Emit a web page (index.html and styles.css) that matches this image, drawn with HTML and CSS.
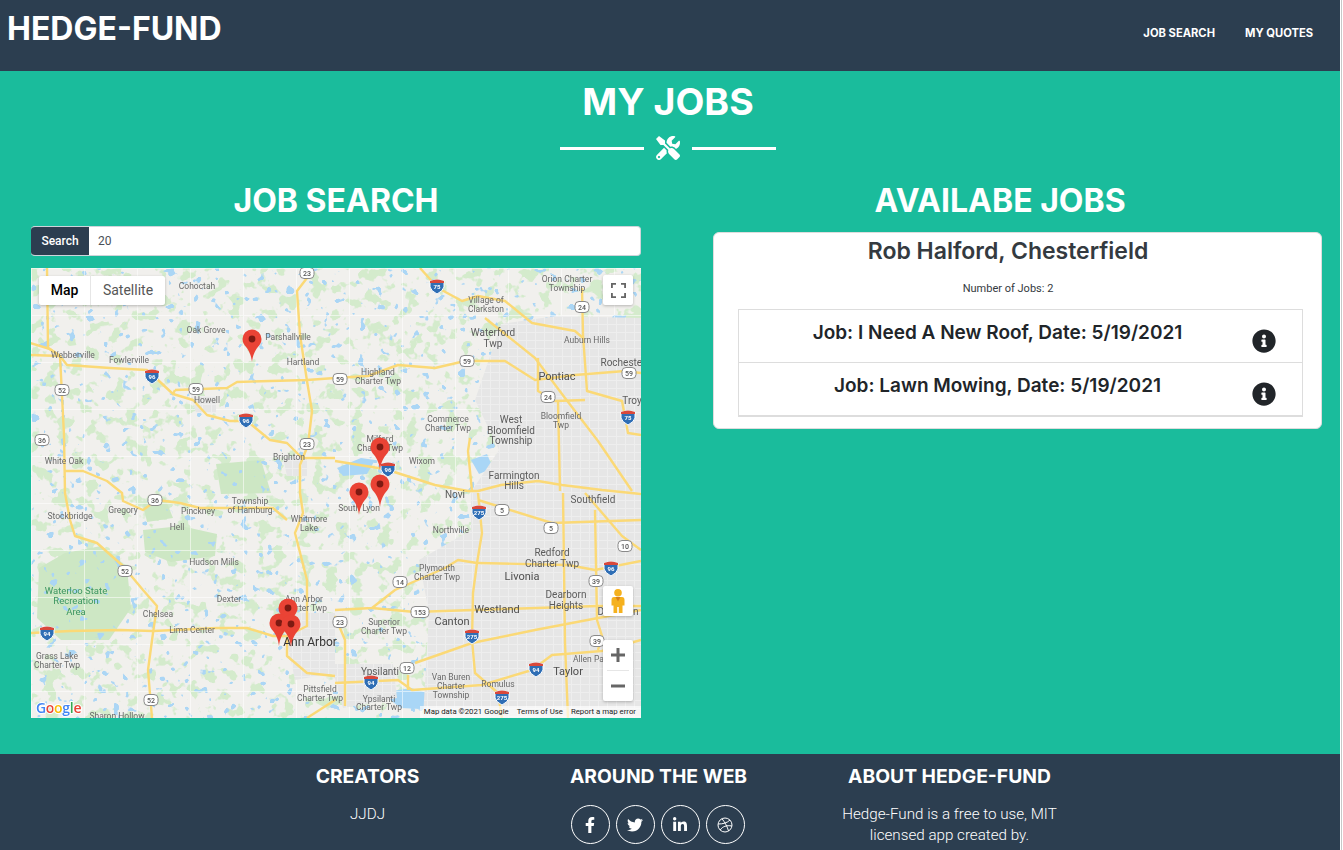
FILE: index.html
```html
<!DOCTYPE html>
<html lang="en">
<head>
<meta charset="utf-8">
<title>Hedge-Fund</title>
<link rel="stylesheet" href="styles.css">
</head>
<body>
<div class="page">
  <header class="navbar">
    <a class="brand">HEDGE-FUND</a>
    <nav class="nav-links"><a>JOB SEARCH</a><a>MY QUOTES</a></nav>
  </header>
  <main class="masthead">
    <h1 class="page-title">MY JOBS</h1>
    <div class="divider">
      <span class="divider-line"></span>
      <svg class="divider-icon" viewBox="0 0 512 512"><path d="M501.1 395.7L384 278.6c-23.1-23.1-57.6-27.6-85.4-13.9L192 158.1V96L64 0 0 64l96 128h62.1l106.6 106.6c-13.6 27.8-9.2 62.3 13.9 85.4l117.1 117.1c14.6 14.6 38.2 14.6 52.7 0l52.7-52.7c14.5-14.6 14.5-38.2 0-52.7zM331.7 225c28.3 0 54.9 11 74.9 31l19.4 19.4c15.8-6.9 30.8-16.5 43.8-29.5 37.1-37.1 49.7-89.3 37.9-136.7-2.2-9-13.5-12.1-20.1-5.5l-74.4 74.4-67.9-11.3L334 98.9l74.4-74.4c6.6-6.6 3.4-17.9-5.7-20.2-47.4-11.7-99.6.9-136.6 37.9-28.5 28.5-41.9 66.1-41.2 103.6l82.1 82.1c8.1-1.9 16.5-2.9 24.7-2.9zm-103.9 82l-56.7-56.7L18.7 402.8c-25 25-25 65.5 0 90.5s65.5 25 90.5 0l123.6-123.6c-7.6-19.9-9.9-41.6-5-62.7zM64 472c-13.2 0-24-10.8-24-24 0-13.3 10.7-24 24-24s24 10.7 24 24c0 13.2-10.7 24-24 24z"/></svg>
      <span class="divider-line"></span>
    </div>
    <div class="columns">
      <section class="col-left">
        <h2 class="col-title">JOB SEARCH</h2>
        <div class="search-group">
          <span class="search-label">Search</span>
          <div class="search-input">20</div>
        </div>
        <div class="map">
          <svg class="map-canvas" viewBox="0 0 610 450" width="610" height="450">
            <defs>
              <filter id="greens" x="0" y="0" width="100%" height="100%" color-interpolation-filters="sRGB">
                <feTurbulence type="fractalNoise" baseFrequency="0.075" numOctaves="3" seed="11"/>
                <feColorMatrix values="0 0 0 0 .83  0 0 0 0 .92  0 0 0 0 .80  1 0 0 0 0"/>
                <feComponentTransfer><feFuncA type="linear" slope="14" intercept="-7.900"/></feComponentTransfer>
              </filter>
              <filter id="lakes" x="0" y="0" width="100%" height="100%" color-interpolation-filters="sRGB">
                <feTurbulence type="fractalNoise" baseFrequency="0.11" numOctaves="2" seed="4"/>
                <feColorMatrix values="0 0 0 0 .67  0 0 0 0 .84  0 0 0 0 .96  0 1 0 0 0"/>
                <feComponentTransfer><feFuncA type="linear" slope="24" intercept="-16.300"/></feComponentTransfer>
              </filter>
              <pattern id="rural" width="53" height="47" patternUnits="userSpaceOnUse">
                <path d="M0 .5H53M.5 0V47" stroke="#fff" stroke-width="1" fill="none"/>
              </pattern>
              <pattern id="streets" width="9" height="8" patternUnits="userSpaceOnUse">
                <rect width="9" height="8" fill="#e6e6e6"/>
                <path d="M0 .5H9M.5 0V8" stroke="#eeeeee" stroke-width="1" fill="none"/>
              </pattern>
              <g id="pin">
                <path d="M0 22C-.8 15-3 11-5.500 7.500C-8 4.500-9.500 2.500-9.500-1A9.500 9.500 0 0 1 9.500-1C9.500 2.500 8 4.500 5.500 7.500C3 11 .8 15 0 22Z" fill="#ea4335"/>
                <circle cy="-1" r="3.400" fill="#7d1a12"/>
              </g>
              <g id="inter">
                <path d="M-7-5Q0-8 7-5L7 1Q6 5 0 8Q-6 5-7 1Z" fill="#2f6eb5" stroke="#fff" stroke-width="1"/>
                <path d="M-7-5Q0-8 7-5L7-3H-7Z" fill="#d9483b"/>
              </g>
              <rect id="shield" x="-7" y="-5.500" width="14" height="11" rx="4" fill="#fff" stroke="#8a8a8a" stroke-width="1"/>
              <rect id="shield3" x="-9" y="-5.500" width="18" height="11" rx="4" fill="#fff" stroke="#8a8a8a" stroke-width="1"/>
            </defs>

            <rect class="land" width="610" height="450"/>
            <rect width="610" height="450" filter="url(#greens)"/>
            <path class="park" d="M8 300L34 285 70 278 96 300 100 340 78 372H30L6 350Z"/>
            <path class="park" d="M112 262L150 258 186 266 184 288 140 294 114 284Z"/>
            <path class="park" d="M185 196L230 192 240 225 190 226Z"/>
            <path class="park" d="M112 236L134 230 142 250 116 254Z"/>
            <rect width="610" height="450" filter="url(#lakes)"/>
            <path class="water" d="M476 128L490 116 510 118 502 140 480 138Z"/>
            <path class="water" d="M306 200L330 190 344 192 336 206 312 208Z"/>
            <path class="water" d="M440 192L456 186 462 200 448 206Z"/>
            <path class="water" d="M350 425L380 420 420 432 410 442 370 440Z"/>
            <rect class="rural" width="610" height="450" fill="url(#rural)"/>
            <path fill="url(#streets)" d="M470 56L525 48 610 50V450H392L398 345 388 292 440 262 440 224 468 182 444 132Z"/>
            <path fill="url(#streets)" d="M250 345L304 345 304 405 264 412Z"/>
            <path fill="url(#streets)" d="M300 396L362 396 366 430 312 440Z"/>
            <path fill="url(#streets)" d="M252 190H276V208H256Z"/>
            <path fill="url(#streets)" d="M160 128H185V145H165Z"/>

            <g class="roads">
              <path d="M-1 87L29 88 36 97 79 100 116 102 127 112 142 126 162 132 176 147 199 153 216 153 239 172 256 175 271 190"/>
              <path d="M304 193L347 200 357 202 404 217 437 223 447 223 470 217 507 213 531 217 571 222 610 226"/>
              <path d="M-1 75L19 81 29 88"/>
              <path d="M16 0L17 80 29 88 33 167 34 225 39 252 44 268 66 275 92 298 112 322 126 338 122 365 117 402 121 450"/>
              <path d="M144 122L196 120 206 114 276 112 304 110 337 108 367 97 404 100 434 93 474 93 504 112 544 107 594 103 610 105"/>
              <path d="M142 126L144 122"/>
              <path d="M276 10L266 23 269 67 276 113 281 143 277 177 269 197 269 225 272 245 264 265 276 312 276 358 256 368 256 388 276 405 304 408"/>
              <path d="M271 190H304"/>
              <path d="M34 203H52L76 213 91 225 92 233 112 242 126 232 149 235 169 240 242 240 256 252"/>
              <path d="M-1 365L39 363 89 362 122 363 186 360 216 360 242 368 256 368"/>
              <path d="M389 0L407 20 431 33 447 28 474 33 501 55 544 63 552 70"/>
              <path d="M551 20L552 67 556 123 591 133 597 165 610 167"/>
              <path d="M454 50L504 90 534 130 567 173 601 223"/>
              <path d="M507 90V123L524 133 554 132"/>
              <path d="M527 133L529 223"/>
              <path d="M439 170L437 183 441 223"/>
              <path d="M447 225L451 265 446 295 442 325 441 372 444 405 467 425 471 450"/>
              <path d="M446 295L427 292 414 300 364 322 341 340 304 342"/>
              <path d="M341 340L384 344 442 342 567 338 610 338"/>
              <path d="M446 295L537 297 564 302 610 293"/>
              <path d="M532 225L534 375 537 450"/>
              <path d="M564 242L566 352 571 368 567 382"/>
              <path d="M447 232L521 255 610 252"/>
              <path d="M554 225L591 268 610 282"/>
              <path d="M304 348L314 372V438"/>
              <path d="M384 395L441 375 504 362 567 350 610 342"/>
              <path d="M304 415L367 412 381 422 451 417 501 402 521 387 571 383 610 372"/>
              <path d="M377 407V422"/>
              <path d="M276 450L304 432"/>
            </g>

            <g class="labels">
              <text x="166" y="21">Cohoctah</text><text x="175" y="65">Oak Grove</text><text x="257" y="72">Parshallville</text><text x="272" y="97">Hartland</text>
              <text x="42" y="90">Webberville</text><text x="98" y="95">Fowlerville</text><text x="176" y="135">Howell</text><text x="258" y="192">Brighton</text><text x="33" y="196">White Oak</text>
              <text x="536" y="14">Orion Charter</text><text x="536" y="23">Township</text><text x="455" y="35">Village of</text><text x="455" y="44">Clarkston</text>
              <text class="lg" x="462" y="68">Waterford</text><text class="lg" x="462" y="79">Twp</text><text x="556" y="75">Auburn Hills</text><text x="610" y="80" class="end">Rochester Hills</text>
              <text class="lg" x="592" y="98">Rochester</text><text class="xl" x="526" y="112">Pontiac</text><text x="347" y="107">Highland</text><text x="347" y="116">Charter Twp</text>
              <text class="lg" x="601" y="136">Troy</text><text x="417" y="154">Commerce</text><text x="417" y="163">Charter Twp</text><text class="lg" x="480" y="155">West</text><text class="lg" x="480" y="166">Bloomfield</text><text class="lg" x="480" y="176">Township</text>
              <text x="530" y="151">Bloomfield</text><text x="530" y="160">Twp</text><text x="349" y="174">Milford</text><text x="349" y="183">Charter Twp</text><text x="391" y="196">Wixom</text>
              <text class="lg" x="483" y="211">Farmington</text><text class="lg" x="483" y="221">Hills</text><text class="lg" x="424" y="230">Novi</text>
              <text x="39" y="251">Stockbridge</text><text x="92" y="245">Gregory</text><text x="167" y="246">Pinckney</text><text x="219" y="236">Township</text><text x="219" y="245">of Hamburg</text><text x="278" y="254">Whitmore</text><text x="278" y="263">Lake</text><text x="146" y="262">Hell</text>
              <text x="183" y="297">Hudson Mills</text><text class="green" x="45" y="326">Waterloo State</text><text class="green" x="45" y="336">Recreation</text><text class="green" x="45" y="347">Area</text>
              <text x="198" y="334">Dexter</text><text x="273" y="334">Ann Arbor</text><text x="273" y="343">Charter Twp</text><text x="127" y="349">Chelsea</text><text x="161" y="365">Lima Center</text>
              <text x="26" y="391">Grass Lake</text><text x="26" y="400">Charter Twp</text><text x="289" y="424">Pittsfield</text><text x="289" y="433">Charter Twp</text><text x="86" y="451">Sharon Hollow</text>
              <text x="328" y="243">South Lyon</text><text class="lg" x="562" y="235">Southfield</text><text x="420" y="265">Northville</text><text class="lg" x="521" y="288">Redford</text><text class="lg" x="521" y="299">Charter Twp</text>
              <text x="406" y="303">Plymouth</text><text x="406" y="312">Charter Twp</text><text class="xl" x="491" y="312">Livonia</text><text class="lg" x="535" y="330">Dearborn</text><text class="lg" x="535" y="341">Heights</text>
              <text class="xl" x="466" y="345">Westland</text><text class="xl" x="421" y="357">Canton</text><text x="353" y="357">Superior</text><text x="353" y="366">Charter Twp</text><text class="lg" x="587" y="347">Dearborn</text><text x="561" y="394">Allen Park</text>
              <text class="lg" x="349" y="407">Ypsilanti</text><text class="xl" x="537" y="407">Taylor</text><text x="420" y="412">Van Buren</text><text x="420" y="421">Charter</text><text x="420" y="430">Township</text><text x="467" y="419">Romulus</text><text x="348" y="434">Ypsilanti</text><text x="348" y="442">Charter Twp</text>
              <text class="xl dark" x="279" y="378">Ann Arbor</text>
            </g>

            <g class="i-shields">
              <g transform="translate(121 108)"><use href="#inter"/><text y="3">96</text></g>
              <g transform="translate(215 152)"><use href="#inter"/><text y="3">96</text></g>
              <g transform="translate(357 201)"><use href="#inter"/><text y="3">96</text></g>
              <g transform="translate(580 300)"><use href="#inter"/><text y="3">96</text></g>
              <g transform="translate(406 18)"><use href="#inter"/><text y="3">75</text></g>
              <g transform="translate(597 149)"><use href="#inter"/><text y="3">75</text></g>
              <g transform="translate(448 244)"><use href="#inter"/><text y="3">275</text></g>
              <g transform="translate(441 368)"><use href="#inter"/><text y="3">275</text></g>
              <g transform="translate(471 429)"><use href="#inter"/><text y="3">275</text></g>
              <g transform="translate(16 365)"><use href="#inter"/><text y="3">94</text></g>
              <g transform="translate(340 414)"><use href="#inter"/><text y="3">94</text></g>
              <g transform="translate(505 401)"><use href="#inter"/><text y="3">94</text></g>
            </g>
            <g class="w-shields">
              <g transform="translate(276 5)"><use href="#shield"/><text y="2.500">23</text></g>
              <g transform="translate(276 176)"><use href="#shield"/><text y="2.500">23</text></g>
              <g transform="translate(309 354)"><use href="#shield"/><text y="2.500">23</text></g>
              <g transform="translate(31 122)"><use href="#shield"/><text y="2.500">52</text></g>
              <g transform="translate(94 303)"><use href="#shield"/><text y="2.500">52</text></g>
              <g transform="translate(120 432)"><use href="#shield"/><text y="2.500">52</text></g>
              <g transform="translate(11 172)"><use href="#shield"/><text y="2.500">36</text></g>
              <g transform="translate(124 232)"><use href="#shield"/><text y="2.500">36</text></g>
              <g transform="translate(165 121)"><use href="#shield"/><text y="2.500">59</text></g>
              <g transform="translate(436 93)"><use href="#shield"/><text y="2.500">59</text></g>
              <g transform="translate(309 111)"><use href="#shield"/><text y="2.500">59</text></g>
              <g transform="translate(598 105)"><use href="#shield"/><text y="2.500">59</text></g>
              <g transform="translate(551 39)"><use href="#shield"/><text y="2.500">24</text></g>
              <g transform="translate(517 129)"><use href="#shield"/><text y="2.500">24</text></g>
              <g transform="translate(471 242)"><use href="#shield"/><text y="2.500">5</text></g>
              <g transform="translate(520 260)"><use href="#shield"/><text y="2.500">5</text></g>
              <g transform="translate(594 278)"><use href="#shield"/><text y="2.500">10</text></g>
              <g transform="translate(369 314)"><use href="#shield"/><text y="2.500">14</text></g>
              <g transform="translate(389 344)"><use href="#shield3"/><text y="2.500">153</text></g>
              <g transform="translate(376 400)"><use href="#shield"/><text y="2.500">12</text></g>
              <g transform="translate(565 313)"><use href="#shield"/><text y="2.500">39</text></g>
              <g transform="translate(566 373)"><use href="#shield"/><text y="2.500">39</text></g>
            </g>

            <use href="#pin" x="221" y="72"/>
            <use href="#pin" x="349" y="180"/>
            <use href="#pin" x="349" y="217"/>
            <use href="#pin" x="328" y="225"/>
            <use href="#pin" x="257" y="341"/>
            <use href="#pin" x="248" y="356"/>
            <use href="#pin" x="260" y="357"/>

            <text class="google" x="5" y="445"><tspan fill="#4285f4">G</tspan><tspan fill="#ea4335">o</tspan><tspan fill="#fbbc05">o</tspan><tspan fill="#4285f4">g</tspan><tspan fill="#34a853">l</tspan><tspan fill="#ea4335">e</tspan></text>
          </svg>

          <div class="map-type"><span class="map-type-on">Map</span><span class="map-type-off">Satellite</span></div>
          <div class="ctl ctl-full">
            <svg viewBox="0 0 18 18" width="15" height="15"><path d="M1 6V1H6M12 1H17V6M17 12V17H12M6 17H1V12" fill="none" stroke="#666" stroke-width="2.400"/></svg>
          </div>
          <div class="ctl ctl-peg">
            <svg viewBox="0 0 14 24" width="14" height="24"><circle cx="7" cy="3.800" r="3.800" fill="#f5b11e"/><path d="M3 8H11Q13.500 8 13.500 11V16.500H11.500V24H7.800V18H6.200V24H2.500V16.500H.5V11Q.5 8 3 8Z" fill="#f5b11e"/><path d="M4.500 8L7 12.500 9.500 8Z" fill="#d8801a"/></svg>
          </div>
          <div class="ctl ctl-zoom">
            <span class="zoom-btn"><svg viewBox="0 0 14 14" width="14" height="14"><path d="M7 0V14M0 7H14" stroke="#666" stroke-width="3"/></svg></span>
            <span class="zoom-sep"></span>
            <span class="zoom-btn"><svg viewBox="0 0 14 14" width="14" height="14"><path d="M0 7H14" stroke="#666" stroke-width="3"/></svg></span>
          </div>
          <div class="attribution"><span>Map data ©2021 Google</span><span>Terms of Use</span><span>Report a map error</span></div>
        </div>
      </section>

      <section class="col-right">
        <h2 class="col-title">AVAILABE JOBS</h2>
        <div class="card">
          <h3 class="card-title">Rob Halford, Chesterfield</h3>
          <p class="card-count">Number of Jobs: 2</p>
          <ul class="job-list">
            <li class="job-row">
              <span class="job-text">Job: I Need A New Roof, Date: 5/19/2021</span>
              <svg class="info" viewBox="0 0 512 512"><path d="M256 8C119.043 8 8 119.083 8 256c0 136.997 111.043 248 248 248s248-111.003 248-248C504 119.083 392.957 8 256 8zm0 110c23.196 0 42 18.804 42 42s-18.804 42-42 42-42-18.804-42-42 18.804-42 42-42zm56 254c0 6.627-5.373 12-12 12h-88c-6.627 0-12-5.373-12-12v-24c0-6.627 5.373-12 12-12h12v-64h-12c-6.627 0-12-5.373-12-12v-24c0-6.627 5.373-12 12-12h64c6.627 0 12 5.373 12 12v100h12c6.627 0 12 5.373 12 12v24z"/></svg>
            </li>
            <li class="job-row">
              <span class="job-text">Job: Lawn Mowing, Date: 5/19/2021</span>
              <svg class="info" viewBox="0 0 512 512"><path d="M256 8C119.043 8 8 119.083 8 256c0 136.997 111.043 248 248 248s248-111.003 248-248C504 119.083 392.957 8 256 8zm0 110c23.196 0 42 18.804 42 42s-18.804 42-42 42-42-18.804-42-42 18.804-42 42-42zm56 254c0 6.627-5.373 12-12 12h-88c-6.627 0-12-5.373-12-12v-24c0-6.627 5.373-12 12-12h12v-64h-12c-6.627 0-12-5.373-12-12v-24c0-6.627 5.373-12 12-12h64c6.627 0 12 5.373 12 12v100h12c6.627 0 12 5.373 12 12v24z"/></svg>
            </li>
          </ul>
        </div>
      </section>
    </div>
  </main>
  <footer class="footer">
    <div class="footer-col">
      <h4 class="footer-title">CREATORS</h4>
      <p class="footer-text">JJDJ</p>
    </div>
    <div class="footer-col">
      <h4 class="footer-title">AROUND THE WEB</h4>
      <div class="socials">
        <a class="social"><svg viewBox="0 0 320 512" width="10" height="16"><path d="M279.14 288l14.22-92.66h-88.91v-60.13c0-25.35 12.42-50.06 52.24-50.06h40.42V6.26S260.43 0 225.36 0c-73.22 0-121.08 44.38-121.08 124.72v70.62H22.89V288h81.39v224h100.17V288z"/></svg></a>
        <a class="social"><svg viewBox="0 0 512 512" width="16" height="16"><path d="M459.37 151.716c.325 4.548.325 9.097.325 13.645 0 138.72-105.583 298.558-298.558 298.558-59.452 0-114.68-17.219-161.137-47.106 8.447.974 16.568 1.299 25.34 1.299 49.055 0 94.213-16.568 130.274-44.832-46.132-.975-84.792-31.188-98.112-72.772 6.498.974 12.995 1.624 19.818 1.624 9.421 0 18.843-1.3 27.614-3.573-48.081-9.747-84.143-51.98-84.143-102.985v-1.299c13.969 7.797 30.214 12.67 47.431 13.319-28.264-18.843-46.781-51.005-46.781-87.391 0-19.492 5.197-37.36 14.294-52.954 51.655 63.675 129.3 105.258 216.365 109.807-1.624-7.797-2.599-15.918-2.599-24.04 0-57.828 46.782-104.934 104.934-104.934 30.213 0 57.502 12.67 76.67 33.137 23.715-4.548 46.456-13.32 66.599-25.34-7.798 24.366-24.366 44.833-46.132 57.827 21.117-2.273 41.584-8.122 60.426-16.243-14.292 20.791-32.161 39.308-52.628 54.253z"/></svg></a>
        <a class="social"><svg viewBox="0 0 448 512" width="14" height="16"><path d="M100.28 448H7.4V148.9h92.88zM53.79 108.1C24.09 108.1 0 83.5 0 53.8a53.79 53.79 0 0 1 107.58 0c0 29.7-24.1 54.3-53.79 54.3zM447.9 448h-92.68V302.4c0-34.7-.7-79.2-48.29-79.2-48.29 0-55.69 37.7-55.69 76.7V448h-92.78V148.9h89.08v40.8h1.3c12.4-23.5 42.69-48.3 87.88-48.3 94 0 111.28 61.9 111.28 142.3V448z"/></svg></a>
        <a class="social"><svg class="dribbble" viewBox="0 0 16 16" width="16" height="16"><circle cx="8" cy="8" r="7"/><path d="M5 1.700C8 5.500 10.500 10 11.500 14M1.200 7C6 7 10 6 13 3M3.200 13C5.500 9.500 9.500 8 14.900 9"/></svg></a>
      </div>
    </div>
    <div class="footer-col">
      <h4 class="footer-title">ABOUT HEDGE-FUND</h4>
      <p class="footer-text">Hedge-Fund is a free to use, MIT<br>licensed app created by.</p>
    </div>
  </footer>
</div>
<div class="edge"></div>
</body>
</html>
```
FILE: styles.css
```css
* { box-sizing: border-box; }
html, body { margin: 0; padding: 0; background: #fff; }
body {
  display: flex;
  width: 1343px;
  height: 850px;
  overflow: hidden;
  font-family: Roboto, "Liberation Sans", sans-serif;
}
.page {
  width: 1340px;
  height: 850px;
  flex: none;
  overflow: hidden;
  background: #1abc9c;
}
.edge { width: 1px; margin-left: 1px; height: 850px; background: #c8c8c8; }

/* nav */
.navbar {
  height: 71px;
  background: #2c3e50;
  display: flex;
  justify-content: space-between;
  align-items: flex-start;
  color: #fff;
}
.brand {
  font-family: Inter, sans-serif;
  font-weight: 700;
  font-size: 32px;
  line-height: 38px;
  margin: 10px 0 0 7px;
}
.nav-links {
  display: flex;
  gap: 30px;
  padding: 26px 27px 0 0;
  font-family: Inter, sans-serif;
  font-weight: 700;
  font-size: 11.200px;
  line-height: 14px;
}

/* heading */
.masthead { height: 683px; color: #fff; padding-top: 9px; }
.page-title {
  margin: 0 0 0 -4px;
  font-family: Inter, sans-serif;
  font-weight: 700;
  font-size: 37.500px;
  line-height: 44px;
  text-align: center;
}
.divider {
  display: flex;
  align-items: center;
  justify-content: center;
  gap: 12px;
  height: 24px;
  margin: 12px 4px 0 0;
}
.divider-line { width: 84px; height: 3px; background: #fff; }
.divider-icon { width: 24px; height: 24px; fill: #fff; }

.columns {
  display: grid;
  grid-template-columns: 610px 609px;
  gap: 72px;
  padding: 23px 0 0 31px;
}
.col-title {
  margin: 0;
  font-family: Inter, sans-serif;
  font-weight: 700;
  font-size: 32px;
  line-height: 36px;
  text-align: center;
}
.col-left .col-title { margin-bottom: 7px; }
.col-right .col-title { margin: 0 0 13px -35px; }

/* search */
.search-group {
  display: flex;
  height: 30px;
  border-radius: 4px;
  overflow: hidden;
  border: 1px solid #ced4da;
  border-left: 0;
  background: #fff;
}
.search-label {
  width: 58px;
  background: #2c3e50;
  color: #fff;
  font-size: 12px;
  font-weight: 500;
  line-height: 28px;
  text-align: center;
}
.search-input {
  flex: 1;
  padding-left: 9px;
  font-size: 12px;
  line-height: 28px;
  color: #495057;
}

/* map */
.map { position: relative; width: 610px; height: 450px; margin-top: 12px; overflow: hidden; }
.map-canvas { display: block; filter: blur(.5px); }
.land { fill: #f1f0ed; }
.park { fill: #cde7c4; }
.water { fill: #a9d6f6; }
.rural { opacity: .55; }
.roads path { fill: none; stroke: #fbd976; stroke-width: 2.400; stroke-linejoin: round; }
.labels text { font: 400 8.500px Roboto, sans-serif; fill: #6a6a6a; text-anchor: middle; }
.labels text.lg { font-size: 10px; fill: #5c5c5c; }
.labels text.xl { font-size: 11px; fill: #4f4f4f; }
.labels text.dark { font-size: 12px; fill: #333; }
.labels text.green { font-size: 9.500px; fill: #3c9660; }
.labels text.end { text-anchor: start; }
.i-shields text { font: 700 6px Roboto, sans-serif; fill: #fff; text-anchor: middle; }
.w-shields text { font: 500 7px Roboto, sans-serif; fill: #555; text-anchor: middle; }
.google { font: 600 14px "Open Sans", sans-serif; letter-spacing: -.3px; stroke: #fff; stroke-width: 2px; paint-order: stroke; }

.map-type {
  position: absolute;
  left: 8px;
  top: 8px;
  display: flex;
  height: 29px;
  background: #fff;
  border-radius: 2px;
  box-shadow: 0 1px 3px rgba(0,0,0,.25);
  font-size: 14px;
  line-height: 29px;
}
.map-type-on { width: 52px; text-align: center; color: #000; font-weight: 500; border-right: 1px solid #e6e6e6; }
.map-type-off { width: 74px; text-align: center; color: #565656; }
.ctl {
  position: absolute;
  left: 572px;
  width: 30px;
  background: #fff;
  border-radius: 2px;
  box-shadow: 0 1px 3px rgba(0,0,0,.25);
  display: flex;
  flex-direction: column;
  align-items: center;
  justify-content: center;
}
.ctl-full { top: 7px; height: 30px; }
.ctl-peg { top: 318px; height: 30px; }
.ctl-zoom { top: 372px; height: 61px; }
.zoom-btn { height: 30px; display: flex; align-items: center; justify-content: center; }
.zoom-sep { width: 22px; height: 1px; background: #e6e6e6; }
.attribution {
  position: absolute;
  right: 0;
  bottom: 0;
  height: 12px;
  display: flex;
  gap: 8px;
  padding: 0 5px 0 4px;
  background: rgba(255,255,255,.65);
  font-size: 7.800px;
  line-height: 12px;
  color: #222;
}

/* card */
.card {
  height: 197px;
  background: #fff;
  border: 1px solid #ddd;
  border-radius: 6px;
  padding: 5px 18px 0 24px;
  color: #343a40;
}
.card-title {
  margin: 0 0 0 -25px;
  font-family: Inter, sans-serif;
  font-weight: 600;
  font-size: 23px;
  line-height: 27px;
  text-align: center;
}
.card-count {
  margin: 17px 0 0 -25px;
  font-size: 11px;
  line-height: 14px;
  text-align: center;
  color: #343a40;
}
.job-list { list-style: none; margin: 13px 0 0; padding: 0; border: 1px solid #ddd; border-bottom-width: 2px; }
.job-row {
  position: relative;
  height: 52.500px;
  padding-top: 10px;
  border-bottom: 1px solid #ddd;
  text-align: center;
}
.job-row:last-child { border-bottom: 0; }
.job-text {
  display: block;
  margin-left: -46px;
  font-family: Inter, sans-serif;
  font-weight: 600;
  font-size: 19px;
  line-height: 26px;
  color: #212529;
}
.info { position: absolute; right: 26px; top: 19px; width: 24px; height: 24px; fill: #212529; }

/* footer */
.footer {
  height: 96px;
  background: #2c3e50;
  color: #fff;
  display: grid;
  grid-template-columns: repeat(3, 291px);
  padding: 11px 0 0 222px;
  text-align: center;
}
.footer-title {
  margin: 0;
  font-family: Inter, sans-serif;
  font-weight: 700;
  font-size: 19.300px;
  line-height: 22px;
}
.footer-text {
  margin: 17px 0 0;
  font-size: 15.200px;
  font-weight: 300;
  line-height: 21px;
}
.socials { display: flex; justify-content: center; gap: 6px; margin: 18px 0 0 -2px; }
.social {
  width: 39px;
  height: 39px;
  border: 1.500px solid #fff;
  border-radius: 50%;
  display: flex;
  align-items: center;
  justify-content: center;
  fill: #fff;
}
.dribbble { fill: none; stroke: #fff; stroke-width: 1; }
```
